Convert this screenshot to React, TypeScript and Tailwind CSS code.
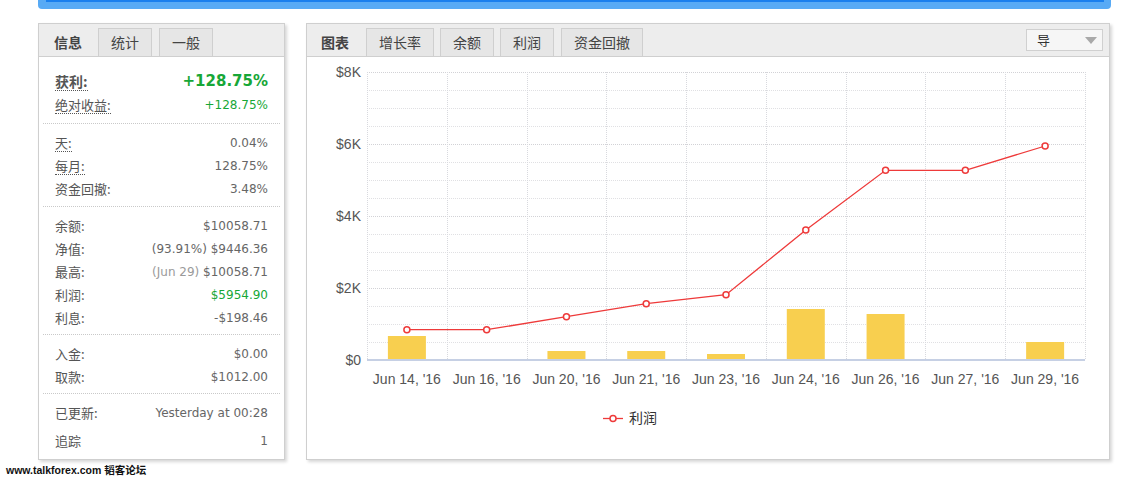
import React from "react";

const cjk = "font-['Noto_Sans_CJK_SC',sans-serif]";
const num = "font-['DejaVu_Sans','Noto_Sans_CJK_SC',sans-serif]";

function Row({
  label,
  value,
  underline,
  h = "h-[23px]",
}: {
  label: string;
  value: React.ReactNode;
  underline?: boolean;
  h?: string;
}) {
  return (
    <div className={`flex items-center justify-between ${h}`}>
      <span className={`${cjk} text-[13px] leading-[17px] text-[#555] ${underline ? "border-b border-dotted border-[#555]" : ""}`}>
        {label}
      </span>
      <span className={`${num} text-[12px] text-[#666]`}>{value}</span>
    </div>
  );
}

function Sep() {
  return <div className="mx-[4px] border-t border-dotted border-[#c9c9c9]" />;
}

function Tab({ children, className = "" }: { children: React.ReactNode; className?: string }) {
  return (
    <div
      className={`h-[28px] px-[12px] border border-b-0 border-[#cfcfcf] bg-[#e6e6e6] flex items-center ${cjk} text-[14px] text-[#444] ${className}`}
    >
      {children}
    </div>
  );
}

const labels = ["Jun 14, '16", "Jun 16, '16", "Jun 20, '16", "Jun 21, '16", "Jun 23, '16", "Jun 24, '16", "Jun 26, '16", "Jun 27, '16", "Jun 29, '16"];
const barTops: (number | null)[] = [336, null, 351, 351, 354, 309, 314, null, 342];
const lineYs = [329.7, 329.7, 316.7, 303.7, 294.7, 230, 170.3, 170.3, 146];

function Chart() {
  const X0 = 60;
  const step = 79.78;
  const W = step * 9;
  const base = 303;
  const hLines = Array.from({ length: 17 }, (_, k) => 15 + 18 * k);
  const vLines = Array.from({ length: 10 }, (_, i) => X0 + i * step);
  const pts = lineYs.map((y, i) => [X0 + step * (i + 0.5), y - 57] as const);
  return (
    <svg width={802} height={402} style={{ fontFamily: "'Liberation Sans','Noto Sans CJK SC',sans-serif" }}>
      {hLines.map((y) => (
        <line key={"h" + y} x1={X0} x2={X0 + W} y1={y + 0.5} y2={y + 0.5} stroke={(y - 15) % 72 === 0 ? "#d2d2d6" : "#e0e0e3"} strokeDasharray="1 1" />
      ))}
      {vLines.map((x) => (
        <line key={"v" + x} x1={Math.round(x) + 0.5} x2={Math.round(x) + 0.5} y1={15} y2={base} stroke="#d8d9de" strokeDasharray="1 1" />
      ))}
      {barTops.map((t, i) =>
        t === null ? null : (
          <rect key={"b" + i} x={X0 + step * (i + 0.5) - 19} y={t - 57} width={38} height={base - (t - 57)} fill="#f8cf4f" />
        )
      )}
      <rect x={X0} y={302} width={W} height={2} fill="#c6d0e4" />
      {[0, 1, 2, 3, 4].map((j) => (
        <text key={"y" + j} x={54} y={base - 72 * j + 1} textAnchor="end" dominantBaseline="middle" fontSize={14} fill="#555">
          {j === 0 ? "$0" : `$${j * 2}K`}
        </text>
      ))}
      {labels.map((l, i) => (
        <text key={"x" + i} x={X0 + step * (i + 0.5)} y={323} textAnchor="middle" dominantBaseline="middle" fontSize={14} fill="#555">
          {l}
        </text>
      ))}
      <polyline points={pts.map((p) => p.join(",")).join(" ")} fill="none" stroke="#ee3a3a" strokeWidth={1.3} />
      {pts.map((p, i) => (
        <circle key={"c" + i} cx={p[0]} cy={p[1]} r={3} fill="#fff" stroke="#ee3a3a" strokeWidth={1.5} />
      ))}
      <line x1={296} x2={316} y1={361.5} y2={361.5} stroke="#ee3a3a" strokeWidth={1.3} />
      <circle cx={306} cy={361.5} r={3} fill="#fff" stroke="#ee3a3a" strokeWidth={1.5} />
      <text x={322} y={362} dominantBaseline="middle" fontSize={14} fill="#333">
        利润
      </text>
    </svg>
  );
}

export default function App() {
  return (
    <div className="w-[1129px] h-[480px] bg-white overflow-hidden font-['Liberation_Sans','Noto_Sans_CJK_SC',sans-serif]">
      <div className="ml-[38px] w-[1073px] h-[9px] bg-[#58aaf5] rounded-b-[4px]">
        <div className="ml-[8px] w-[1058px] h-[2px] bg-[#1a7fee]" />
      </div>
      <div className="flex mt-[14px] ml-[38px] gap-[21px]">
        {/* Left panel */}
        <div className="w-[247px] h-[437px] border border-[#cfcfcf] bg-white shadow-[2px_2px_3px_rgba(0,0,0,0.16)] flex flex-col">
          <div className="h-[33px] bg-[#ededed] border-b border-[#cfcfcf] flex items-end">
            <div className={`ml-[15px] h-[28px] flex items-center ${cjk} text-[14px] font-bold text-[#444]`}>信息</div>
            <Tab className="ml-[16px]">统计</Tab>
            <Tab className="ml-[7px]">一般</Tab>
          </div>
          <div className="px-[16px] pt-[13px] pb-[7px]">
            <div className="flex items-center justify-between h-[23px]">
              <span className={`${cjk} text-[14px] leading-[18px] font-bold text-[#555] border-b border-dotted border-[#555]`}>获利:</span>
              <span className={`${num} text-[15px] font-bold text-[#17a737]`}>+128.75%</span>
            </div>
            <Row label="绝对收益:" underline value={<span className="text-[#17a737]">+128.75%</span>} />
          </div>
          <Sep />
          <div className="px-[16px] pt-[7px] pb-[6px]">
            <Row label="天:" underline value="0.04%" />
            <Row label="每月:" underline value="128.75%" />
            <Row label="资金回撤:" value="3.48%" />
          </div>
          <Sep />
          <div className="px-[16px] pt-[7px] pb-[5px]">
            <Row label="余额:" value="$10058.71" />
            <Row label="净值:" value="(93.91%) $9446.36" />
            <Row label="最高:" value={<><span className="text-[#9a9a9a]">(Jun 29)</span> $10058.71</>} />
            <Row label="利润:" value={<span className="text-[#17a737]">$5954.90</span>} />
            <Row label="利息:" value="-$198.46" />
          </div>
          <Sep />
          <div className="px-[16px] pt-[7px] pb-[5px]">
            <Row label="入金:" value="$0.00" />
            <Row label="取款:" value="$1012.00" />
          </div>
          <Sep />
          <div className="px-[16px] pt-[7px]">
            <Row label="已更新:" value="Yesterday at 00:28" />
            <Row label="追踪" value="1" h="h-[23px] mt-[5px]" />
          </div>
        </div>

        {/* Right panel */}
        <div className="w-[804px] h-[437px] border border-[#cfcfcf] bg-white shadow-[2px_2px_3px_rgba(0,0,0,0.16)] flex flex-col">
          <div className="h-[33px] bg-[#ededed] border-b border-[#cfcfcf] flex items-end">
            <div className={`ml-[14px] h-[28px] flex items-center ${cjk} text-[14px] font-bold text-[#444]`}>图表</div>
            <Tab className="ml-[17px]">增长率</Tab>
            <Tab className="ml-[6px]">余额</Tab>
            <Tab className="ml-[6px]">利润</Tab>
            <Tab className="ml-[7px]">资金回撤</Tab>
            <div className="ml-auto mr-[6px] self-start mt-[5px] w-[77px] h-[22px] border border-[#d0d0d0] bg-[#f6f6f6] flex items-center justify-between pl-[10px] pr-[5px]">
              <span className={`${cjk} text-[13px] text-[#333]`}>导</span>
              <svg width="12" height="7" viewBox="0 0 12 7">
                <polygon points="0,0 12,0 6,7" fill="#a9a9a9" />
              </svg>
            </div>
          </div>
          <Chart />
        </div>
      </div>
      <div className="mt-[3px] ml-[6px] h-[14px] leading-[14px] text-[10.5px] font-bold text-[#111]">
        www.talkforex.com 韬客论坛
      </div>
    </div>
  );
}
